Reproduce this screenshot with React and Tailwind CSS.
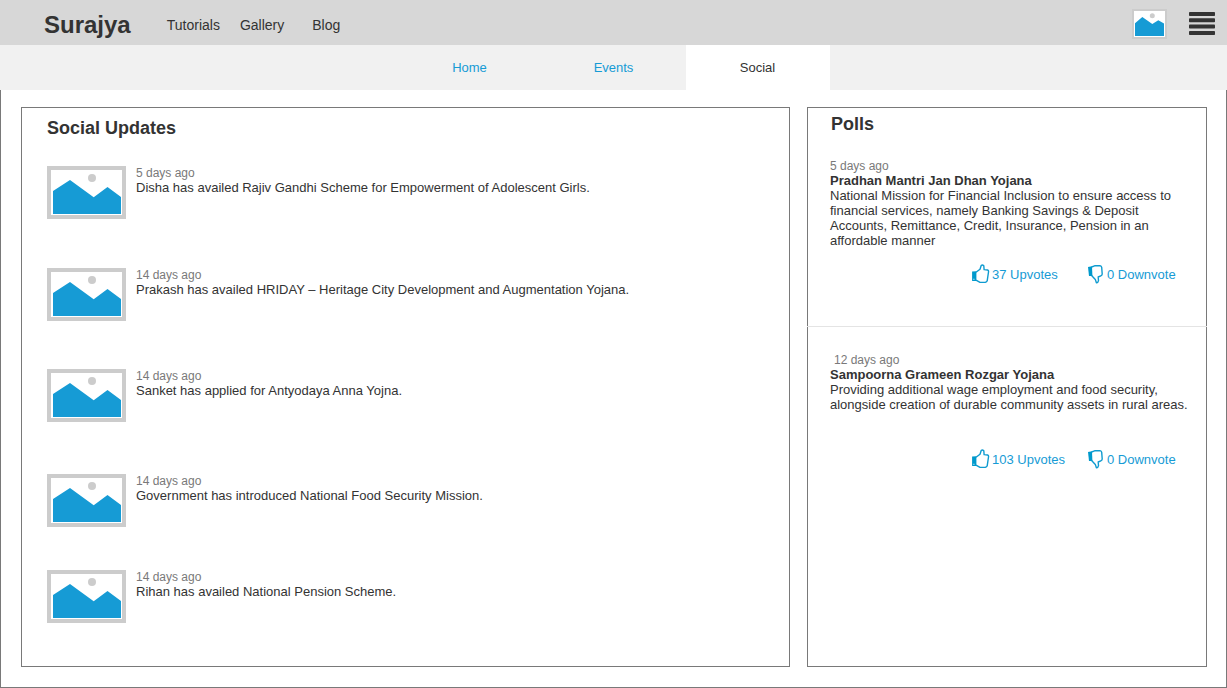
const updates = [
  { when: "5 days ago", text: "Disha has availed Rajiv Gandhi Scheme for Empowerment of Adolescent Girls.", space: "mb-[49px]" },
  { when: "14 days ago", text: "Prakash has availed HRIDAY – Heritage City Development and Augmentation Yojana.", space: "mb-12" },
  { when: "14 days ago", text: "Sanket has applied for Antyodaya Anna Yojna.", space: "mb-13" },
  { when: "14 days ago", text: "Government has introduced National Food Security Mission.", space: "mb-[43px]" },
  { when: "14 days ago", text: "Rihan has availed National Pension Scheme.", space: "mb-0" },
];

const polls = [
  {
    when: "5 days ago",
    title: "Pradhan Mantri Jan Dhan Yojana",
    text: "National Mission for Financial Inclusion to ensure access to financial services, namely Banking Savings & Deposit Accounts, Remittance, Credit, Insurance, Pension in an affordable manner",
    up: "37 Upvotes",
    down: "0 Downvote",
    box: "pt-6 pb-[42px]",
    date: "",
    votes: "mt-4",
  },
  {
    when: "12 days ago",
    title: "Sampoorna Grameen Rozgar Yojana",
    text: "Providing additional wage employment and food security, alongside creation of durable community assets in rural areas.",
    up: "103 Upvotes",
    down: "0 Downvote",
    box: "border-t border-[#e4e4e4] -mx-px px-px pt-[26px] pb-10",
    date: "pl-1",
    votes: "mt-[37px]",
  },
];

function Thumbnail() {
  return (
    <svg className="block h-[53px] w-[79px] shrink-0" viewBox="0 0 79 53" aria-hidden="true">
      <rect width="79" height="53" fill="#cccccc" />
      <rect x="4" y="4" width="71" height="45" fill="#ffffff" />
      <polygon points="6,25 23,14 46.7,31.3 60.5,21 74,31 74,48 6,48" fill="#169bd5" />
      <circle cx="45" cy="12" r="4" fill="#cccccc" />
    </svg>
  );
}

function Avatar() {
  return (
    <svg className="block h-[30px] w-[35px]" viewBox="0 0 35 30" aria-hidden="true">
      <rect width="35" height="30" fill="#cccccc" />
      <rect x="2" y="2" width="31" height="26" fill="#ffffff" />
      <polygon points="3,14.3 10.3,8 20.3,15 26.3,11.3 32,14.5 32,27 3,27" fill="#169bd5" />
      <circle cx="20.3" cy="6.7" r="2.5" fill="#cccccc" />
    </svg>
  );
}

function MenuIcon() {
  return (
    <svg className="block h-[23px] w-[26px]" viewBox="0 0 26 23" fill="#333333" aria-hidden="true">
      <rect y="0" width="26" height="4" rx="0.8" />
      <rect y="6.3" width="26" height="4" rx="0.8" />
      <rect y="12.6" width="26" height="4" rx="0.8" />
      <rect y="19" width="26" height="4" rx="0.8" />
    </svg>
  );
}

function ThumbUp() {
  return (
    <svg className="block h-5 w-[18px] shrink-0" viewBox="0 0 18 20" aria-hidden="true">
      <path
        d="M4 8.3 L8 5.2 L9.3 1.3 Q10.6 .6 11.8 1.8 L12.1 5.6 L15.6 6 Q16.8 6.4 16.5 8 L15.2 16.8 Q14.8 18 13.4 18.2 L8 18.4 L4 16.2"
        fill="none"
        stroke="#0f9bd0"
        strokeWidth="1.4"
        strokeLinejoin="round"
      />
      <path d="M.1 7.6 L4.4 7.2 V17 L.1 17 Z M1.4 14.8 V15.8 H2.4 V14.8 Z" fill="#0099cc" fillRule="evenodd" />
    </svg>
  );
}

function ThumbDown() {
  return (
    <svg className="block h-5 w-[18px] shrink-0" viewBox="0 0 18 20" aria-hidden="true">
      <path
        d="M4.6 3 L7.6 1.8 L13 1.6 Q14.4 1.8 14.7 3.4 L15.2 10 Q15.2 11.2 13.8 11.8 L11.2 13 L11.5 16.6 Q11 18.9 9.4 18.7 L8.3 15.4 L4.6 11.6"
        fill="none"
        stroke="#0f9bd0"
        strokeWidth="1.4"
        strokeLinejoin="round"
      />
      <path d="M1 3 L5 2.3 L5.4 12 L2 12 Z" fill="#0099cc" />
    </svg>
  );
}

export default function App() {
  return (
    <div className="flex min-h-screen flex-col bg-white font-['Liberation_Sans',Arial,sans-serif] text-[13px] leading-[15px] text-[#333333]">
      <header className="flex h-[45px] items-center bg-[#d7d7d7] pr-3 pl-11 text-sm">
        <a href="#" className="mt-1 text-2xl leading-7 font-bold">Surajya</a>
        <nav className="ml-9 flex items-center pt-1">
          <a href="#tutorials" className="mr-5">Tutorials</a>
          <a href="#gallery" className="mr-7">Gallery</a>
          <a href="#blog">Blog</a>
        </nav>
        <div className="ml-auto flex items-center gap-[22px] pt-0.5">
          <button type="button" aria-label="Profile"><Avatar /></button>
          <button type="button" aria-label="Menu"><MenuIcon /></button>
        </div>
      </header>

      <nav className="flex h-[45px] justify-center bg-[#f1f1f1] text-center leading-[45px] text-[#169bd5]">
        <a href="#home" className="w-36">Home</a>
        <a href="#events" className="w-36">Events</a>
        <a href="#social" aria-current="page" className="w-36 bg-white text-[#333333]">Social</a>
      </nav>

      <main className="flex flex-1 gap-[17px] border-x border-b border-[#797979] pt-[17px] pr-[19px] pb-5 pl-5">
        <section className="flex-1 border border-[#797979] px-[25px] pt-2.5 pb-10">
          <h2 className="mb-[27px] text-lg leading-[21px] font-bold">Social Updates</h2>
          <ul>
            {updates.map((u) => (
              <li key={u.text} className={`flex gap-2.5 ${u.space}`}>
                <Thumbnail />
                <div>
                  <p className="text-xs leading-[14px] text-[#797979]">{u.when}</p>
                  <p>{u.text}</p>
                </div>
              </li>
            ))}
          </ul>
        </section>

        <section className="w-[400px] shrink-0 border border-[#797979] pt-1.5">
          <h2 className="pl-[23px] text-lg leading-[21px] font-bold">Polls</h2>
          {polls.map((p) => (
            <article key={p.title} className={p.box}>
              <div className="pr-3.5 pl-[22px]">
                <p className={`text-xs leading-[14px] text-[#797979] ${p.date}`}>{p.when}</p>
                <h3 className="font-bold">{p.title}</h3>
                <p>{p.text}</p>
              </div>
              <div className={`flex justify-end pr-4 text-[#169bd5] ${p.votes}`}>
                <button type="button" className="flex w-[115px] items-center gap-0.5"><ThumbUp />{p.up}</button>
                <button type="button" className="flex w-[103px] items-center gap-0.5"><ThumbDown />{p.down}</button>
              </div>
            </article>
          ))}
        </section>
      </main>
    </div>
  );
}
